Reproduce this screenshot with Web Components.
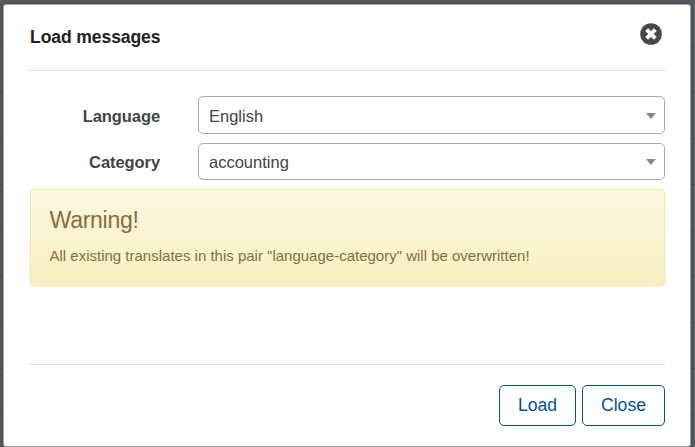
<!DOCTYPE html>
<html lang="en">
<head>
<meta charset="utf-8">
<title>Load messages</title>
<style>
html,body{height:100%}
body{margin:0;overflow:hidden;background:#54565a;font-family:"Liberation Sans",Arial,sans-serif;color:#444}
</style>
</head>
<body>
<modal-dialog>
  <span slot="title">Load messages</span>
  <select-field label="Language">English</select-field>
  <select-field label="Category" style="height:37px">accounting</select-field>
  <alert-box heading="Warning!">All existing translates in this pair "language-category" will be overwritten!</alert-box>
  <outline-button slot="actions" style="width:77px">Load</outline-button>
  <outline-button slot="actions" style="width:83px">Close</outline-button>
</modal-dialog>
<script>
const define = (name, html, setup) => customElements.define(name, class extends HTMLElement {
  constructor() {
    super();
    this.attachShadow({ mode: 'open' }).innerHTML = html;
  }
  connectedCallback() { if (setup) setup(this, this.shadowRoot); }
});

define('modal-dialog', `
<style>
:host{display:block;box-sizing:border-box;height:447px;padding:4px 4px 0 3px;background:repeating-linear-gradient(#585b60 0 45px,#4c4f53 45px 46px) 0 1px}
.panel{box-sizing:border-box;height:443px;border:1px solid #a2a2a2;border-radius:3px;background:#fff;padding:0 25px 0 26px;display:flex;flex-direction:column;box-shadow:0 0 5px rgba(0,0,0,.25)}
header{box-sizing:border-box;height:66px;border-bottom:1px solid #ddd;display:flex;justify-content:space-between;flex:none}
h1{margin:22px 0 0;font-size:17.6px;letter-spacing:-.12px;line-height:20px;font-weight:bold;color:#222}
svg{width:22px;height:22px;margin:18px 3px 0 0}
main{flex:1;padding-top:25px}
footer{box-sizing:border-box;height:82px;flex:none;border-top:1px solid #ddd;padding-top:20px;display:flex;justify-content:flex-end;gap:6px;align-items:flex-start}
</style>
<div class="panel">
<header><h1><slot name="title"></slot></h1>
<svg viewBox="0 0 22 22"><circle cx="11" cy="11" r="10.8" fill="#484848"/><path d="M6.7 6.7l8.6 8.6M15.3 6.7l-8.6 8.6" stroke="#fff" stroke-width="4"/></svg></header>
<main><slot></slot></main>
<footer><slot name="actions"></slot></footer>
</div>`);

define('select-field', `
<style>
:host{display:flex;align-items:center;height:38px;margin-bottom:9px;font-size:16.5px}
label{width:130px;margin-right:38px;text-align:right;font-size:16.5px;letter-spacing:-.08px;font-weight:bold;line-height:20px;padding-top:1px;color:#444}
.box{flex:1;box-sizing:border-box;height:100%;border:1px solid #aaa;border-radius:5px;padding:2px 8px 0 10px;display:flex;align-items:center;justify-content:space-between;color:#444}
i{border:5px solid transparent;border-top:6px solid #888;border-bottom:0;margin-top:-1px}
</style>
<label></label><div class="box"><span><slot></slot></span><i></i></div>`,
(el, root) => { root.querySelector('label').textContent = el.getAttribute('label'); });

define('alert-box', `
<style>
:host{display:block;box-sizing:border-box;height:97px;padding:18px 19px 0 18.5px;border:1px solid #f5e79e;border-radius:4px;background:linear-gradient(#fcf8e3,#f8efc0);box-shadow:0 1px 2px rgba(0,0,0,.05);color:#8a6d3b}
h2{margin:0;font-size:23.1px;letter-spacing:-.3px;line-height:25px;font-weight:normal}
p{margin:14px 0 0;font-size:15px;line-height:18px;white-space:nowrap}
</style>
<h2></h2><p><slot></slot></p>`,
(el, root) => { root.querySelector('h2').textContent = el.getAttribute('heading'); });

define('outline-button', `
<style>
:host{display:block}
button{box-sizing:border-box;width:100%;height:41px;border:1px solid #00529b;border-radius:5px;background:#fff;color:#00529b;font:17.6px/20px "Liberation Sans",Arial,sans-serif;padding:0 0 2px}
</style>
<button><slot></slot></button>`);
</script>
</body>
</html>
